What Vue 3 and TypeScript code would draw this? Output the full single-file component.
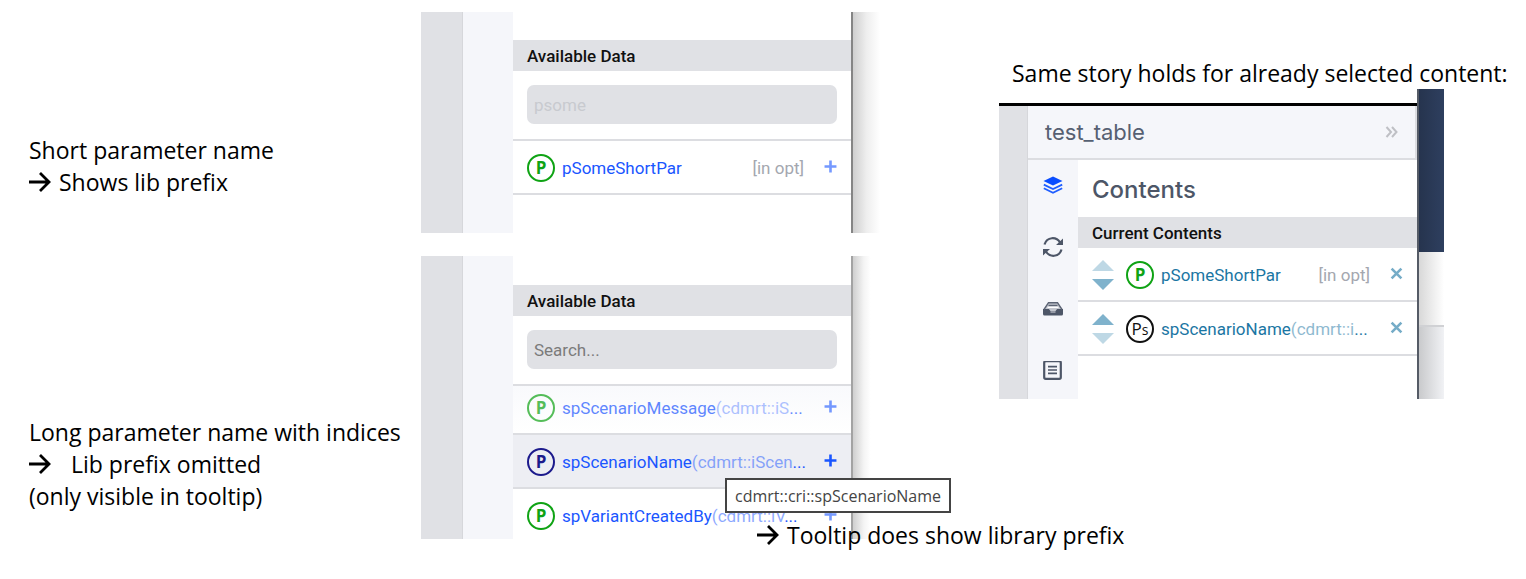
<script setup lang="ts">
import { ref } from 'vue'

interface Param {
  name: string
  index?: string
  badge: string
  tone: string
  kind?: string
}

const query = ref('psome')
const search = ref('')

const found: Param[] = [{ name: 'pSomeShortPar', badge: 'P', tone: 'green', kind: '[in opt]' }]
const all: Param[] = [
  { name: 'spScenarioMessage', index: '(cdmrt::iS', badge: 'P', tone: 'green faded' },
  { name: 'spScenarioName', index: '(cdmrt::iScen', badge: 'P', tone: 'navy active' },
  { name: 'spVariantCreatedBy', index: '(cdmrt::iV', badge: 'P', tone: 'green' },
]
const current: Param[] = [
  { name: 'pSomeShortPar', badge: 'P', tone: 'green', kind: '[in opt]' },
  { name: 'spScenarioName', index: '(cdmrt::i', badge: 'P', tone: 'black' },
]
</script>

<template>
  <main class="page">
    <section class="notes">
      <p class="note">Short parameter name<br />
        <svg class="arrow" viewBox="0 0 22 20"><path d="M0 10H20M11 1L20 10L11 19" /></svg><span class="after">Shows lib prefix</span>
      </p>
      <p class="note">Long parameter name with indices<br />
        <svg class="arrow" viewBox="0 0 22 20"><path d="M0 10H20M11 1L20 10L11 19" /></svg><span class="after far">Lib prefix omitted</span><br />
        (only visible in tooltip)
      </p>
    </section>

    <section class="available">
      <div class="panel first">
        <div class="gutter"></div>
        <div class="strip"></div>
        <div class="body">
          <h2 class="bar">Available Data</h2>
          <div class="field"><input v-model="query" class="search dim" type="text" aria-label="Filter available data" /></div>
          <ul class="list">
            <li v-for="p in found" :key="p.name" class="row" :class="p.tone">
              <span class="badge">{{ p.badge }}</span>
              <span class="name">{{ p.name }}</span>
              <span class="kind">{{ p.kind }}</span>
              <button class="act" type="button" :aria-label="'Add ' + p.name"><svg viewBox="0 0 12 12"><path d="M6 0.5V11.5M0.5 6H11.5" /></svg></button>
            </li>
          </ul>
        </div>
        <div class="shade"></div>
      </div>

      <div class="panel second">
        <div class="gutter"></div>
        <div class="strip"></div>
        <div class="body">
          <h2 class="bar">Available Data</h2>
          <div class="field"><input v-model="search" class="search" type="text" placeholder="Search..." aria-label="Search available data" /></div>
          <ul class="list clipped">
            <li v-for="p in all" :key="p.name" class="row" :class="p.tone">
              <span class="badge">{{ p.badge }}</span>
              <span class="name">{{ p.name }}<span class="index">{{ p.index }}</span>...</span>
              <button class="act" type="button" :aria-label="'Add ' + p.name"><svg viewBox="0 0 12 12"><path d="M6 0.5V11.5M0.5 6H11.5" /></svg></button>
            </li>
          </ul>
        </div>
        <div class="shade"></div>
        <div class="tooltip" role="tooltip">cdmrt::cri::spScenarioName</div>
        <p class="note caption"><svg class="arrow" viewBox="0 0 22 20"><path d="M0 10H20M11 1L20 10L11 19" /></svg><span class="after">Tooltip does show library prefix</span></p>
      </div>
    </section>

    <section class="selected">
      <p class="note heading">Same story holds for already selected content:</p>
      <div class="shot">
        <div class="window">
          <div class="gutter slim"></div>
          <div class="frame">
            <header class="top">
              <h1>test_table</h1>
              <button class="collapse" type="button" aria-label="Collapse panel"><svg viewBox="0 0 13 12"><path d="M1.5 1L6 6L1.5 11M7 1L11.5 6L7 11" /></svg></button>
            </header>
            <div class="inner">
              <nav class="strip tools">
                <button type="button" aria-label="Contents">
                  <svg viewBox="0 0 20 20"><path fill="#0a4dff" d="M10 1.5L19.5 6L10 10.5L0.5 6Z" /><path fill="none" stroke="#1f5eff" stroke-width="1.8" d="M0.8 9.6L10 14L19.2 9.6M0.8 13.3L10 17.7L19.2 13.3" /></svg>
                </button>
                <button type="button" aria-label="Refresh">
                  <svg viewBox="0 0 20 20"><path fill="none" stroke="#4d5667" stroke-width="2.2" d="M1.5 7.5C4 -0.5 13.5 -0.5 17 5.5M18.5 12.5C16 20.5 6.5 20.5 3 14.5" /><path fill="#4d5667" d="M20 1.5V8H13ZM0 18.5V12H7Z" /></svg>
                </button>
                <button type="button" aria-label="Storage">
                  <svg viewBox="0 0 20 20"><path fill="#c3c6ce" d="M6 3H14L18 10H14L12.5 12H7.5L6 10H2Z" /><path fill="#4d5667" d="M0 10H6L7.5 12H12.5L14 10H20V15Q20 16.5 18.5 16.5H1.5Q0 16.5 0 15Z" /><path fill="none" stroke="#5c6474" stroke-width="1.4" d="M1 10.5L5.5 3.7H14.5L19 10.5M5.5 6.4H14.5" /><path stroke="#fff" stroke-width="1.3" d="M4.5 8.4H15.5" /><path stroke="#c3c6ce" stroke-width="1.2" d="M7.5 13H12.5" /></svg>
                </button>
                <button type="button" aria-label="Details">
                  <svg viewBox="0 0 20 20"><rect x="1.2" y="0.2" width="16.6" height="17.6" rx="1.5" fill="none" stroke="#4d5667" stroke-width="2.2" /><path stroke="#4d5667" stroke-width="1.6" d="M5 5.6H14M5 9H14M5 12.4H14" /></svg>
                </button>
              </nav>
              <div class="body">
                <h2 class="title">Contents</h2>
                <h3 class="bar">Current Contents</h3>
                <ul class="list">
                  <li v-for="(p, i) in current" :key="p.name" class="row teal" :class="p.tone">
                    <span class="sort">
                      <button type="button" :class="{ off: i === 0 }" :aria-label="'Move up ' + p.name"><svg viewBox="0 0 22 11"><path d="M0 11L11 0L22 11Z" /></svg></button>
                      <button type="button" :class="{ off: i === 1 }" :aria-label="'Move down ' + p.name"><svg viewBox="0 0 22 11"><path d="M0 0H22L11 11Z" /></svg></button>
                    </span>
                    <span class="badge">{{ p.badge }}<small v-if="p.index">s</small></span>
                    <span class="name">{{ p.name }}<template v-if="p.index"><span class="index">{{ p.index }}</span>...</template></span>
                    <span v-if="p.kind" class="kind">{{ p.kind }}</span>
                    <button class="act" type="button" :aria-label="'Remove ' + p.name"><svg viewBox="0 0 12 12"><path d="M1.5 1.5L10.5 10.5M10.5 1.5L1.5 10.5" /></svg></button>
                  </li>
                </ul>
              </div>
            </div>
          </div>
        </div>
        <div class="backdrop"><div class="sky"></div><div class="sheet"></div><div class="floor"></div></div>
      </div>
    </section>
  </main>
</template>

<style>
body { background: #fff; }
</style>

<style scoped>
* { box-sizing: border-box; }
.page {
  display: grid;
  grid-template-columns: 421fr 578fr 527fr;
  min-height: 100vh;
  font-family: Roboto, "Liberation Sans", sans-serif;
  color: #000;
}
h1, h2, h3, p, ul { margin: 0; padding: 0; }
ul { list-style: none; }
button { border: 0; padding: 0; background: none; font: inherit; color: inherit; cursor: pointer; display: block; flex: none; }
svg { display: block; }

.note { font: 23px/32px "Open Sans", "Noto Sans", sans-serif; white-space: nowrap; }
.notes { padding: 134px 0 0 29px; display: flex; flex-direction: column; gap: 218px; }
.arrow { display: inline-block; width: 22px; height: 20px; fill: none; stroke: #000; stroke-width: 2.8; vertical-align: -1px; }
.after { margin-left: 8px; }
.far { margin-left: 20px; }

.available { padding-top: 12px; min-width: 0; display: flex; flex-direction: column; gap: 23px; }
.panel { display: flex; position: relative; width: 459px; max-width: 100%; }
.first { min-height: 221px; }
.second { height: 283px; }
.gutter { width: 42px; background: #e0e1e5; border-right: 1px solid #d6d7db; flex: none; }
.slim { width: 29px; }
.strip { width: 50px; background: #f5f6fa; flex: none; }
.body { flex: 1; min-width: 0; background: #fff; display: flex; flex-direction: column; }
.first .body { padding-top: 28px; }
.second .body { padding-top: 29px; }
.shade { width: 29px; flex: none; border-left: 2px solid #858585; background: linear-gradient(90deg, #cfcfcf, #eee 50%, #fff); }
.second .shade { border-color: #a3a3a3; background: linear-gradient(90deg, #cfcfcf, #f4f4f4 40%, #fff 65%); }

.bar { flex: none; height: 31px; padding-left: 14px; background: #e0e1e5; font: 500 17px/32px Roboto, sans-serif; color: #111; }
.field { padding: 14px 14px 15px; border-bottom: 2px solid #dcdde1; }
.search { display: block; width: 100%; height: 39px; border: 0; outline: 0; border-radius: 7px; padding: 0 7px; background: #e0e1e5; font: 17px/24px Roboto, sans-serif; color: #777; }
.search::placeholder { color: #7b7b7b; opacity: 1; }
.dim { color: #c8cacf; }

.list { flex: none; }
.clipped { flex: 1; min-height: 0; overflow: hidden; }
.clipped .row:first-child { margin-top: -5px; }
.row { height: 54px; padding: 2px 14px 0; display: flex; align-items: center; border-bottom: 2px solid #dcdde1; color: #1a56ff; font-size: 17px; }
.badge { width: 28px; height: 28px; border: 2px solid currentColor; border-radius: 50%; display: flex; align-items: center; justify-content: center; flex: none; font: 700 17px/24px "Open Sans", sans-serif; }
.badge small { font-size: 14px; line-height: 24px; padding-top: 2px; }
.green .badge { color: #0fa314; }
.navy .badge { color: #1c1a8c; }
.black .badge { color: #111; font-weight: 500; }
.name { margin-left: 7px; flex: 1; min-width: 0; white-space: nowrap; }
.index { opacity: 0.5; }
.kind { color: #a4a7af; white-space: nowrap; margin-right: 20px; }
.act { width: 13px; height: 13px; opacity: 0.6; margin-bottom: 3px; }
.act svg { width: 13px; height: 13px; fill: none; stroke: currentColor; stroke-width: 2.4; }
.active { background: #edeef3; }
.active .act { opacity: 1; }
.faded { background: linear-gradient(#f8f9fc, #fff); }
.faded .badge, .faded .name { opacity: 0.7; }

.tooltip { position: absolute; left: 304px; top: 222px; height: 35px; padding: 0 8px; border: 2px solid #444; background: #fff; color: #444; font: 16px/32px "Open Sans", sans-serif; white-space: nowrap; }
.caption { position: absolute; left: 336px; top: 263px; }

.selected { padding-top: 57px; min-width: 0; }
.heading { padding-left: 13px; }
.shot { display: flex; width: 445px; max-width: 100%; height: 310px; }
.window { flex: 1; min-width: 0; display: flex; margin-top: 14px; border-top: 3px solid #000; }
.frame { flex: 1; min-width: 0; display: flex; flex-direction: column; }
.top { height: 54px; padding: 0 17px; display: flex; align-items: center; justify-content: space-between; background: #f5f6fa; border-bottom: 2px solid #dcdde1; border-right: 2px solid #dcdde1; }
.top h1 { font: 400 22px/28px Inter, sans-serif; color: #566072; }
.collapse svg { width: 13px; height: 12px; fill: none; stroke: #bfc0c5; stroke-width: 2; }
.inner { flex: 1; display: flex; }
.tools { display: flex; flex-direction: column; align-items: center; padding-top: 15px; gap: 42px; }
.tools svg { width: 20px; height: 20px; }
.title { height: 57px; padding-left: 14px; font: 500 24px/59px Inter, sans-serif; color: #4d5667; }
.teal { color: #1b76a3; }
.sort { display: flex; flex-direction: column; gap: 8px; margin-right: 12px; flex: none; color: #7fb2cc; }
.sort svg { width: 22px; height: 11px; fill: currentColor; }
.off { opacity: 0.5; }
.backdrop { width: 27px; flex: none; border-left: 2px solid #555b66; display: flex; flex-direction: column; }
.sky { height: 163px; background: linear-gradient(90deg, #26344e, #2e3f5f); }
.sheet { height: 75px; background: linear-gradient(90deg, #d8d8d8, #fff); border-bottom: 2px solid #d0d1d4; }
.floor { flex: 1; background: linear-gradient(90deg, #c9cacc, #f1f2f5); }
</style>
